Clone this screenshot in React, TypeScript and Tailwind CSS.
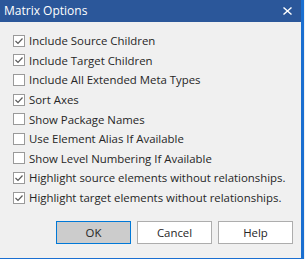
import React from 'react';

const options: { label: string; checked: boolean }[] = [
  { label: 'Include Source Children', checked: true },
  { label: 'Include Target Children', checked: true },
  { label: 'Include All Extended Meta Types', checked: false },
  { label: 'Sort Axes', checked: true },
  { label: 'Show Package Names', checked: false },
  { label: 'Use Element Alias If Available', checked: false },
  { label: 'Show Level Numbering If Available', checked: false },
  { label: 'Highlight source elements without relationships.', checked: true },
  { label: 'Highlight target elements without relationships.', checked: true },
];

const CheckRow: React.FC<{ label: string; checked: boolean }> = ({ label, checked }) => (
  <div className="flex items-center h-[19.6px]">
    <div className="w-[12px] h-[12px] border border-[#9a9a9a] bg-white flex items-center justify-center shrink-0">
      {checked && (
        <svg width="10" height="10" viewBox="0 0 10 10">
          <path d="M1.5 5 L4 7.5 L8.5 2.5" fill="none" stroke="#5a5a5a" strokeWidth="1.2" />
        </svg>
      )}
    </div>
    <span className="ml-[4px] text-[11.4px] text-[#262626] whitespace-nowrap">{label}</span>
  </div>
);

export default function App() {
  return (
    <div
      className="w-[305px] h-[259px] bg-[#f0f0f0] flex"
      style={{ fontFamily: '"Open Sans", "Noto Sans", sans-serif' }}
    >
      <div className="w-[304px] h-[259px] flex flex-col border-r-[3px] border-b border-[#1a6fd1]">
        {/* Title bar */}
        <div className="h-[22px] bg-[#2b579a] flex items-center justify-between pl-[4px] pr-[9px] shrink-0">
          <span className="text-white text-[12px]">Matrix Options</span>
          <svg width="9" height="8" viewBox="0 0 9 8">
            <path d="M0.5 0.5 L8.5 7.5 M8.5 0.5 L0.5 7.5" stroke="white" strokeWidth="1.4" />
          </svg>
        </div>

        {/* Options */}
        <div className="flex-1 flex flex-col pl-[13px] pt-[9px]">
          {options.map((o) => (
            <CheckRow key={o.label} label={o.label} checked={o.checked} />
          ))}

          {/* Buttons */}
          <div className="flex gap-[6px] mt-[14px] pl-[43px]">
            <button className="w-[75px] h-[23px] bg-[#cccccc] border border-[#0078d7] text-[11.4px] text-[#262626]">
              OK
            </button>
            <button className="w-[75px] h-[23px] bg-white border border-[#adadad] text-[11.4px] text-[#262626]">
              Cancel
            </button>
            <button className="w-[75px] h-[23px] bg-white border border-[#adadad] text-[11.4px] text-[#262626]">
              Help
            </button>
          </div>
        </div>
      </div>
    </div>
  );
}
